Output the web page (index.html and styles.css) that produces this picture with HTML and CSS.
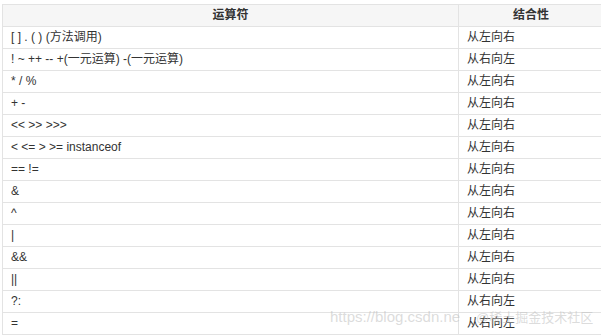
FILE: index.html
```html
<!DOCTYPE html>
<html>
<head>
<meta charset="utf-8">
<link rel="stylesheet" href="styles.css">
</head>
<body>
<div class="page">
<table class="ops">
<thead>
<tr><th class="c1">运算符</th><th class="c2">结合性</th></tr>
</thead>
<tbody>
<tr><td>[ ] . ( ) (方法调用)</td><td>从左向右</td></tr>
<tr><td>! ~ ++ -- +(一元运算) -(一元运算)</td><td>从右向左</td></tr>
<tr><td>* / %</td><td>从左向右</td></tr>
<tr><td>+ -</td><td>从左向右</td></tr>
<tr><td>&lt;&lt; &gt;&gt; &gt;&gt;&gt;</td><td>从左向右</td></tr>
<tr><td>&lt; &lt;= &gt; &gt;= instanceof</td><td>从左向右</td></tr>
<tr><td>== !=</td><td>从左向右</td></tr>
<tr><td>&amp;</td><td>从左向右</td></tr>
<tr><td>^</td><td>从左向右</td></tr>
<tr><td>|</td><td>从左向右</td></tr>
<tr><td>&amp;&amp;</td><td>从左向右</td></tr>
<tr><td>||</td><td>从左向右</td></tr>
<tr><td>?:</td><td>从右向左</td></tr>
<tr><td>=</td><td>从右向左</td></tr>
</tbody>
</table>
<div class="wm"><span class="wm-url">https://blog.csdn.ne</span><span class="wm-gap"></span><span class="wm-brand">@稀土掘金技术社区</span></div>
</div>
</body>
</html>
```
FILE: styles.css
```css
html, body {
  margin: 0;
  padding: 0;
  background: #fff;
  overflow: hidden;
}
.page {
  position: relative;
  width: 601px;
  height: 336px;
  padding: 4px 0 0 2px;
  box-sizing: border-box;
}
.ops {
  border-collapse: collapse;
  width: 601px;
  table-layout: fixed;
  font-family: "Microsoft YaHei", "Liberation Sans", Arial, "Noto Sans CJK SC", sans-serif;
  font-size: 12px;
  color: #333;
}
.ops th, .ops td {
  border: 1px solid #e3e3e3;
  height: 22px;
  padding: 0 8px;
  box-sizing: border-box;
  line-height: 21px;
  white-space: nowrap;
}
.ops th {
  background: #f6f6f6;
  font-weight: bold;
  text-align: center;
  color: #333;
}
.ops td {
  text-align: left;
}
.c1 { width: 456px; }
.c2 { width: 145px; }
.wm {
  position: absolute;
  left: 330px;
  top: 307px;
  display: flex;
  align-items: center;
  font-family: "Liberation Sans", Arial, "Noto Sans CJK SC", sans-serif;
  font-size: 15px;
  color: rgba(190, 190, 190, 0.55);
  white-space: nowrap;
  pointer-events: none;
}
.wm-gap { width: 16px; }
.wm-brand { font-size: 13px; }
```
